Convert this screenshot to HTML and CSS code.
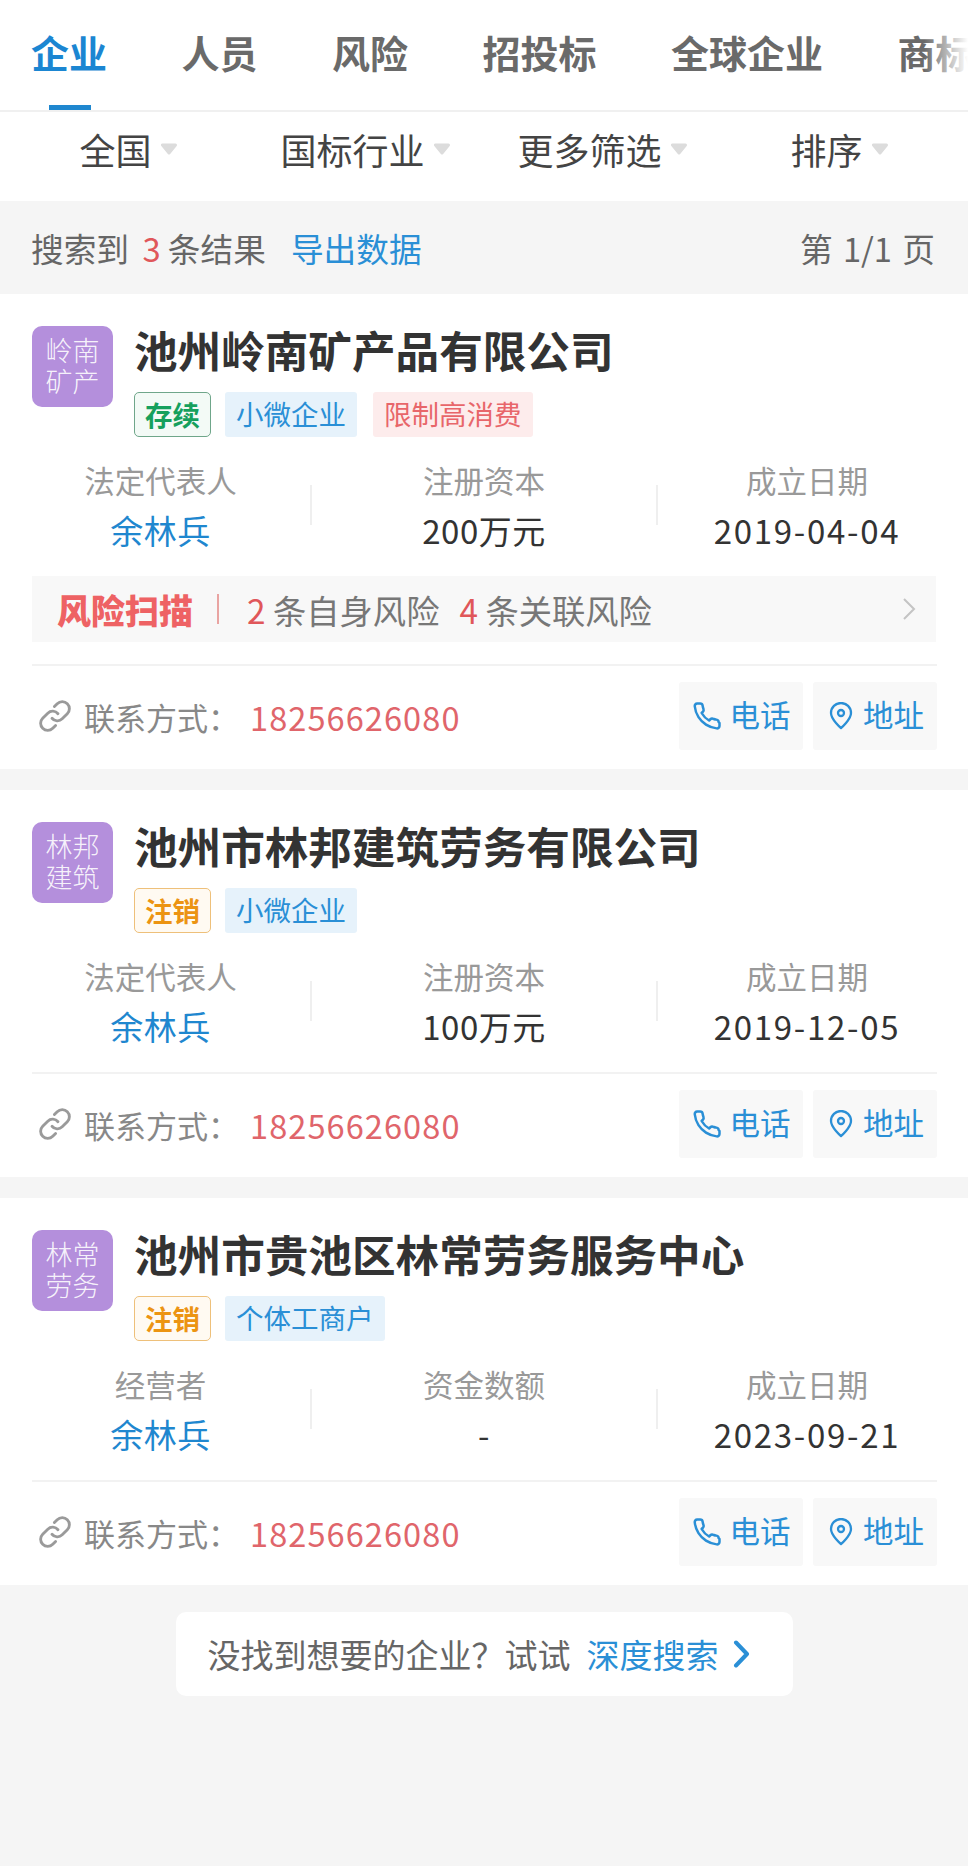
FILE: index.html
```html
<!DOCTYPE html>
<html lang="zh-CN">
<head>
<meta charset="utf-8">
<title>企业搜索</title>
<link rel="stylesheet" href="styles.css">
</head>
<body>
<svg class="sprite" aria-hidden="true">
  <symbol id="i-tri" viewBox="0 0 18 12"><path d="M2.5 2h13L9 10z" fill="#dcdcdc" stroke="#dcdcdc" stroke-width="3" stroke-linejoin="round"/></symbol>
  <symbol id="i-link" viewBox="0 0 24 24"><g fill="none" stroke="#9a9a9a" stroke-width="1.9" stroke-linecap="round" stroke-linejoin="round"><path d="M10 13.5a4.6 4.6 0 0 0 6.8.4l3.4-3.4a4.7 4.7 0 0 0-6.7-6.7l-1.9 1.9"/><path d="M14 10.5a4.6 4.6 0 0 0-6.8-.4l-3.4 3.4a4.7 4.7 0 0 0 6.7 6.7l1.9-1.9"/></g></symbol>
  <symbol id="i-phone" viewBox="0 0 24 24"><path fill="none" stroke="#2a8fd6" stroke-width="2" stroke-linecap="round" stroke-linejoin="round" d="M22 17.5v2.4a2 2 0 0 1-2.2 2 19.8 19.8 0 0 1-8.6-3 19.5 19.5 0 0 1-6-6 19.8 19.8 0 0 1-3-8.700A2 2 0 0 1 4.100 2h2.400a2 2 0 0 1 2 1.700c.1 1 .4 1.900.7 2.800a2 2 0 0 1-.5 2.100l-1 1a16 16 0 0 0 6 6l1-1a2 2 0 0 1 2.100-.4c.9.3 1.800.6 2.800.7a2 2 0 0 1 1.700 2z"/></symbol>
  <symbol id="i-pin" viewBox="0 0 24 28"><g fill="none" stroke="#2a8fd6" stroke-width="2.300" stroke-linejoin="round"><path d="M12 26S2 17.500 2 11a10 10 0 0 1 20 0c0 6.500-10 15-10 15z"/><circle cx="12" cy="11" r="3"/></g></symbol>
</svg>

<nav class="tabs">
  <span class="tab tab-active">企业</span>
  <span class="tab">人员</span>
  <span class="tab">风险</span>
  <span class="tab">招投标</span>
  <span class="tab">全球企业</span>
  <span class="tab">商标</span>
</nav>

<div class="filters">
  <div class="filter">全国<svg class="tri"><use href="#i-tri"/></svg></div>
  <div class="filter">国标行业<svg class="tri"><use href="#i-tri"/></svg></div>
  <div class="filter">更多筛选<svg class="tri"><use href="#i-tri"/></svg></div>
  <div class="filter">排序<svg class="tri"><use href="#i-tri"/></svg></div>
</div>

<div class="summary">
  <div>搜索到 <span class="red count">3</span> 条结果<a class="export">导出数据</a></div>
  <div class="page">第 1/1 页</div>
</div>

<article class="card">
  <div class="head">
    <div class="logo">岭南<br>矿产</div>
    <div class="info">
      <h2 class="name">池州岭南矿产品有限公司</h2>
      <div class="tags">
        <span class="tag tag-green">存续</span>
        <span class="tag tag-blue">小微企业</span>
        <span class="tag tag-red">限制高消费</span>
      </div>
    </div>
  </div>
  <div class="stats">
    <div class="stat"><div class="label">法定代表人</div><div class="value blue">余林兵</div></div>
    <div class="stat stat-mid"><div class="label">注册资本</div><div class="value">200万元</div></div>
    <div class="stat"><div class="label">成立日期</div><div class="value date">2019-04-04</div></div>
  </div>
  <div class="risk">
    <span class="risk-logo">风险扫描</span>
    <span class="risk-bar"></span>
    <span class="risk-text"><span class="red">2</span> 条自身风险</span>
    <span class="risk-text"><span class="red">4</span> 条关联风险</span>
    <svg class="risk-arrow" viewBox="0 0 14 24"><path d="M2 2l10 10L2 22" fill="none" stroke="#c4c4c4" stroke-width="2"/></svg>
  </div>
  <div class="contact">
    <svg class="link-icon"><use href="#i-link"/></svg>
    <span class="contact-label">联系方式：</span>
    <span class="phone">18256626080</span>
    <span class="btn btn-first"><svg class="ico-phone"><use href="#i-phone"/></svg>电话</span>
    <span class="btn btn-addr"><svg class="ico-pin"><use href="#i-pin"/></svg>地址</span>
  </div>
</article>

<article class="card">
  <div class="head">
    <div class="logo">林邦<br>建筑</div>
    <div class="info">
      <h2 class="name">池州市林邦建筑劳务有限公司</h2>
      <div class="tags">
        <span class="tag tag-orange">注销</span>
        <span class="tag tag-blue">小微企业</span>
      </div>
    </div>
  </div>
  <div class="stats">
    <div class="stat"><div class="label">法定代表人</div><div class="value blue">余林兵</div></div>
    <div class="stat stat-mid"><div class="label">注册资本</div><div class="value">100万元</div></div>
    <div class="stat"><div class="label">成立日期</div><div class="value date">2019-12-05</div></div>
  </div>
  <div class="contact">
    <svg class="link-icon"><use href="#i-link"/></svg>
    <span class="contact-label">联系方式：</span>
    <span class="phone">18256626080</span>
    <span class="btn btn-first"><svg class="ico-phone"><use href="#i-phone"/></svg>电话</span>
    <span class="btn btn-addr"><svg class="ico-pin"><use href="#i-pin"/></svg>地址</span>
  </div>
</article>

<article class="card">
  <div class="head">
    <div class="logo">林常<br>劳务</div>
    <div class="info">
      <h2 class="name">池州市贵池区林常劳务服务中心</h2>
      <div class="tags">
        <span class="tag tag-orange">注销</span>
        <span class="tag tag-blue">个体工商户</span>
      </div>
    </div>
  </div>
  <div class="stats">
    <div class="stat"><div class="label">经营者</div><div class="value blue">余林兵</div></div>
    <div class="stat stat-mid"><div class="label">资金数额</div><div class="value">-</div></div>
    <div class="stat"><div class="label">成立日期</div><div class="value date">2023-09-21</div></div>
  </div>
  <div class="contact">
    <svg class="link-icon"><use href="#i-link"/></svg>
    <span class="contact-label">联系方式：</span>
    <span class="phone">18256626080</span>
    <span class="btn btn-first"><svg class="ico-phone"><use href="#i-phone"/></svg>电话</span>
    <span class="btn btn-addr"><svg class="ico-pin"><use href="#i-pin"/></svg>地址</span>
  </div>
</article>

<div class="deep">
  <div class="deep-box">
    <span>没找到想要的企业？试试</span>
    <span class="deep-link">深度搜索</span>
    <svg class="deep-arrow" viewBox="0 0 18 28"><path d="M3 2.500l11 11.500L3 25.500" fill="none" stroke="#2a8fd6" stroke-width="4" stroke-linecap="round" stroke-linejoin="round"/></svg>
  </div>
</div>
</body>
</html>
```
FILE: styles.css
```css
* { box-sizing: border-box; }
html, body { margin: 0; padding: 0; }
body {
  width: 968px;
  min-height: 1866px;
  overflow: hidden;
  background: #f5f5f5;
  font-family: "Noto Sans CJK SC", "Noto Sans", sans-serif;
  color: #333;
}
.sprite { display: none; }
.red { color: #e0575a; }
.blue { color: #1f87cf; }

.tabs {
  position: relative;
  display: flex;
  gap: 74.500px;
  height: 112px;
  padding: 28px 0 0 31px;
  background: #fff;
  border-bottom: 2px solid #f0f0f0;
  overflow: hidden;
  white-space: nowrap;
}
.tabs::after {
  content: "";
  position: absolute;
  top: 0;
  right: 0;
  bottom: 0;
  width: 44px;
  background: linear-gradient(to right, rgba(255,255,255,0), #fff);
}
.tab {
  position: relative;
  flex: none;
  font-size: 38px;
  line-height: 48px;
  font-weight: 700;
  color: #6a6a6a;
}
.tab-active { color: #1b86d2; }
.tab-active::after {
  content: "";
  position: absolute;
  left: 18px;
  top: 77px;
  width: 42px;
  height: 5px;
  background: #1f87cf;
}

.filters {
  display: grid;
  grid-template-columns: repeat(4, 1fr);
  height: 89px;
  padding: 0 10px;
  background: #fff;
}
.filter {
  display: flex;
  align-items: center;
  justify-content: center;
  gap: 8px;
  font-size: 36px;
  color: #444;
  padding-bottom: 15px;
}
.tri { width: 18px; height: 12px; margin-top: -1px; }

.summary {
  display: flex;
  justify-content: space-between;
  align-items: center;
  height: 93px;
  padding: 0 33px 0 31px;
  font-size: 32.700px;
  color: #666;
}
.count { margin-left: 6px; }
.page { word-spacing: 3px; }
.export { margin-left: 25px; color: #2a8fd6; }

.card {
  background: #fff;
  padding-top: 32px;
  margin-bottom: 21px;
}
.head {
  display: flex;
  gap: 21px;
  padding-left: 32px;
}
.logo {
  flex: none;
  width: 81px;
  height: 81px;
  border-radius: 10px;
  background: #b48fdc;
  color: rgba(255,255,255,.9);
  font-size: 27px;
  line-height: 31px;
  font-weight: 300;
  text-align: center;
  padding-top: 8px;
}
.name {
  margin: -3px 0 0 0;
  font-size: 43.600px;
  line-height: 52px;
  font-weight: 700;
  color: #333;
  white-space: nowrap;
}
.tags {
  display: flex;
  gap: 14px;
  margin-top: 17px;
}
.tag {
  height: 45px;
  line-height: 43px;
  padding: 0 11px;
  font-size: 27.500px;
  border-radius: 3px;
}
.tag-green { padding: 0 10px; color: #16a05d; font-weight: 700; background: #f3faf6; border: 1px solid #6fa68a; border-radius: 5px; }
.tag-orange { padding: 0 10px; color: #ec9412; font-weight: 700; background: #fffaf2; border: 1px solid #eec07a; border-radius: 5px; }
.tag-blue { color: #2a8fd6; background: #e6f2fb; }
.tag-red { margin-left: 2px; color: #e8666a; background: #fdecec; }

.stats {
  display: grid;
  grid-template-columns: 301px 346px 300px;
  margin: 21px 0 24px 10px;
}
.stat { text-align: center; }
.stat-mid { position: relative; }
.stat-mid::before,
.stat-mid::after {
  content: "";
  position: absolute;
  top: 27px;
  width: 2px;
  height: 40px;
  background: #efefef;
}
.stat-mid::before { left: -1px; }
.stat-mid::after { right: -1px; }
.label {
  font-size: 30.500px;
  line-height: 44px;
  color: #999;
}
.value {
  margin-top: 6px;
  font-size: 33px;
  line-height: 44px;
  letter-spacing: .5px;
}
.date { letter-spacing: 1.700px; }

.risk {
  display: flex;
  align-items: center;
  height: 66px;
  margin: 0 32px 22px;
  padding-left: 25px;
  background: #f8f8f8;
  font-size: 33.300px;
  color: #777;
}
.risk-logo {
  font-size: 34px;
  font-weight: 900;
  color: #ee6264;
  white-space: nowrap;
}
.risk-bar {
  width: 2px;
  height: 30px;
  margin: 0 28px 0 24px;
  background: #e9a4a2;
}
.risk-text { margin-right: 20px; white-space: nowrap; }
.risk-arrow { width: 14px; height: 24px; margin-left: auto; margin-right: 20px; }

.contact {
  display: flex;
  align-items: center;
  height: 105px;
  margin: 0 31px 0 32px;
  padding-bottom: 3px;
  border-top: 2px solid #f2f2f2;
}
.link-icon { width: 36px; height: 36px; margin-left: 5px; flex: none; }
.contact-label {
  margin-left: 11px;
  font-size: 31px;
  color: #888;
  white-space: nowrap;
}
.phone {
  margin-left: 11px;
  font-size: 32.500px;
  letter-spacing: 1.100px;
  color: #e0656b;
}
.btn {
  display: flex;
  align-items: center;
  justify-content: center;
  gap: 8px;
  flex: none;
  width: 124px;
  height: 68px;
  margin-left: 10px;
  padding-bottom: 4px;
  background: #f8f8f8;
  border-radius: 3px;
  font-size: 30.500px;
  color: #2a8fd6;
}
.btn-first { margin-left: auto; }
.btn-addr { gap: 10px; padding-left: 3px; }
.ico-phone { width: 30px; height: 30px; margin-top: 4px; }
.ico-pin { width: 24px; height: 28px; margin-top: 4px; }

.deep {
  display: flex;
  justify-content: center;
  margin-top: 27px;
}
.deep-box {
  display: flex;
  align-items: center;
  width: 617px;
  height: 84px;
  padding-left: 32px;
  background: #fff;
  border-radius: 10px;
  font-size: 33px;
  color: #666;
  white-space: nowrap;
}
.deep-link { margin-left: 16px; color: #2a8fd6; }
.deep-arrow { width: 18px; height: 28px; margin-left: 14px; }
```
